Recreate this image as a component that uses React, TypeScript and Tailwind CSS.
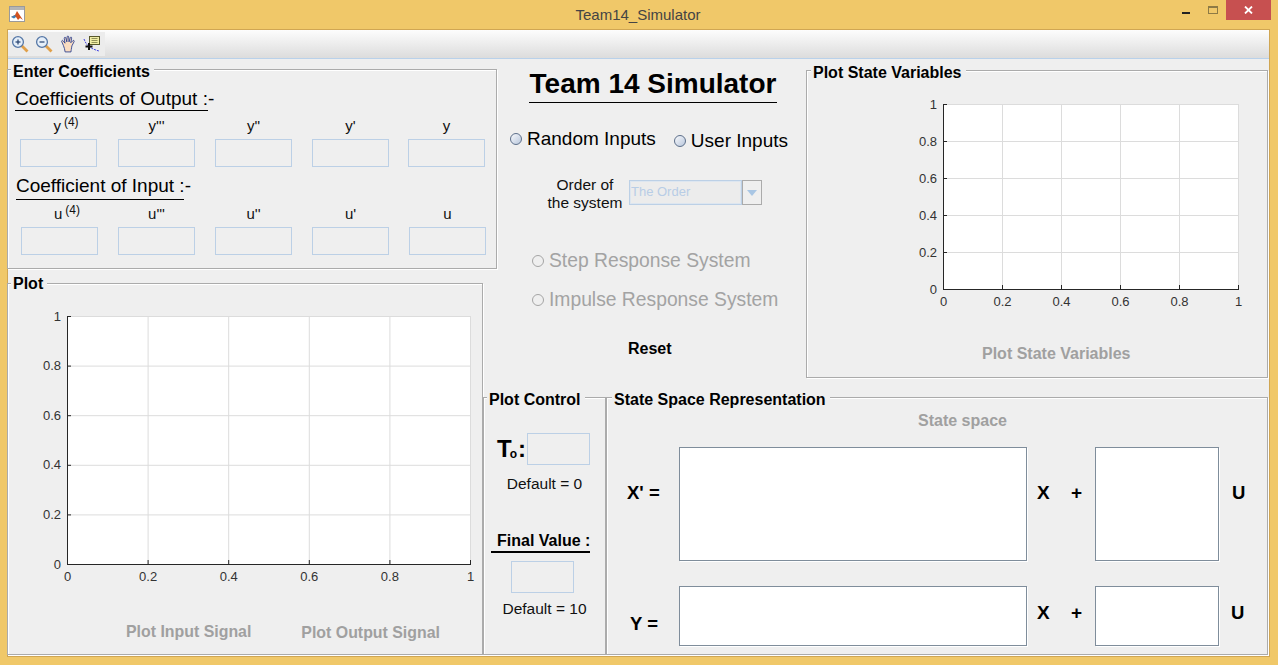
const font = "[font-family:'Liberation_Sans',Arial,sans-serif]";

function CoefRow({ letter, gaps }: { letter: string; gaps: number[] }) {
  const labels = [
    <span className="pl-[15px]">
      {letter}
      <sup className="relative -top-[5px] ml-[3px] align-baseline text-[12px]">(4)</sup>
    </span>,
    <>{letter}'''</>,
    <>{letter}''</>,
    <>{letter}'</>,
    <>{letter}</>,
  ];
  return (
    <div className="flex">
      {labels.map((label, i) => (
        <div key={i} className="flex w-[77px] flex-col items-center" style={{ marginLeft: gaps[i] }}>
          <div className="flex h-[20px] items-end whitespace-nowrap text-[15px] leading-[18px] text-[#111]">{label}</div>
          <div className="mt-[4px] h-[28px] w-[77px] border border-[#bcd0e6] bg-[#efefef]" />
        </div>
      ))}
    </div>
  );
}

function Panel({
  title,
  titleLeft = "left-[3px]",
  titleTop = "-top-[7px]",
  className = "",
  children,
}: {
  title: string;
  titleLeft?: string;
  titleTop?: string;
  className?: string;
  children?: React.ReactNode;
}) {
  return (
    <div className={`relative border border-[#ababab] shadow-[inset_1px_1px_0_#fff,1px_1px_0_#fff] ${className}`}>
      <div
        className={`absolute bg-[#efefef] pl-[2px] pr-[4px] text-[16px] font-bold leading-[18px] text-black whitespace-nowrap ${titleLeft} ${titleTop}`}
      >
        {title}
      </div>
      {children}
    </div>
  );
}

function Chart({ w, h }: { w: number; h: number }) {
  const left = 30;
  const top = 8;
  const ticks = [0, 0.2, 0.4, 0.6, 0.8, 1];
  return (
    <svg width={left + w + 12} height={top + h + 26} className="block">
      <rect x={left} y={top} width={w} height={h} fill="#fff" />
      {ticks.map((t) => {
        const x = left + t * w + 0.5;
        return (
          <g key={"x" + t}>
            <line x1={x} x2={x} y1={top} y2={top + h} stroke="#dcdcdc" />
            <line x1={x} x2={x} y1={top + h} y2={top + h - 4} stroke="#262626" />
            <text x={x} y={top + h + 17} textAnchor="middle" fontSize={13} fill="#333" fontFamily="Liberation Sans">
              {t}
            </text>
          </g>
        );
      })}
      {ticks.map((t) => {
        const y = top + h - t * h + 0.5;
        return (
          <g key={"y" + t}>
            <line x1={left} x2={left + w} y1={y} y2={y} stroke="#dcdcdc" />
            <line x1={left} x2={left + 4} y1={y} y2={y} stroke="#262626" />
            <text x={left - 6} y={y + 4} textAnchor="end" fontSize={13} fill="#333" fontFamily="Liberation Sans">
              {t}
            </text>
          </g>
        );
      })}
      <line x1={left + 0.5} x2={left + 0.5} y1={top} y2={top + h + 1} stroke="#262626" />
      <line x1={left} x2={left + w + 1} y1={top + h + 0.5} y2={top + h + 0.5} stroke="#262626" />
    </svg>
  );
}

function Radio({ disabled = false }: { disabled?: boolean }) {
  return (
    <span
      className={`inline-block h-[12px] w-[12px] rounded-full border ${
        disabled
          ? "border-[#a5a5a5] bg-[#efefef]"
          : "border-[#5d6f8a] bg-gradient-to-br from-[#f8f9fc] to-[#b9c7dc]"
      }`}
    />
  );
}

function MatrixBox({ className = "" }: { className?: string }) {
  return <div className={`border border-[#7f8d9b] bg-white shadow-[1px_1px_0_#fff] ${className}`} />;
}

function Magnifier({ plus }: { plus: boolean }) {
  return (
    <svg width="18" height="18" viewBox="0 0 18 18">
      <line x1="10.5" y1="10.5" x2="16.5" y2="16.5" stroke="#e0a04a" strokeWidth="2.8" />
      <circle cx="7" cy="7" r="5.4" fill="#e6eff9" stroke="#5577a6" strokeWidth="1.3" />
      <line x1="4.5" y1="7" x2="9.5" y2="7" stroke="#24406e" strokeWidth="1.2" />
      {plus && <line x1="7" y1="4.5" x2="7" y2="9.5" stroke="#24406e" strokeWidth="1.2" />}
    </svg>
  );
}

function ToolIcons() {
  return (
    <div className="flex h-[24px] items-center gap-[6px] bg-[#ececec] pl-[3px] pr-[4px]">
      <Magnifier plus />
      <Magnifier plus={false} />
      <svg width="18" height="18" viewBox="1.5 0.5 13.5 16.5">
        <path
          d="M4 10 L2.5 6.5 C2.2 5.5 3.4 5 4 6 L5.5 8 L4.8 3.5 C4.7 2.4 6 2.2 6.3 3.3 L7.2 6.8 L7.4 2.3 C7.5 1.2 8.8 1.2 8.9 2.3 L9.2 6.8 L10.3 3 C10.6 2 11.8 2.3 11.6 3.4 L10.8 7.6 L12.6 5.8 C13.4 5 14.4 5.8 13.8 6.7 L11.8 10.5 C11.4 13 11 15 11 16 L5.6 16 C5.4 14 4.8 12 4 10 Z"
          fill="#fadcc0"
          stroke="#2a3f8f"
          strokeWidth="0.8"
        />
      </svg>
      <svg width="18" height="18" viewBox="0 0 18 18">
        <rect x="6.5" y="1.5" width="10" height="8" fill="#f1eea6" stroke="#59592c" />
        <path d="M8.5 3.5h6M8.5 5.5h6M8.5 7.5h6" stroke="#7a7a44" strokeWidth="0.8" />
        <path d="M1 4 C3 9 5 13 16 16" fill="none" stroke="#2b2be0" strokeWidth="0.9" strokeDasharray="2 1" />
        <path d="M6 8v7M2.5 11.5h7" stroke="#111" strokeWidth="2" />
      </svg>
    </div>
  );
}

function MatrixRow({
  label,
  height,
  className,
  labelClass,
  sideTop,
  uClass,
}: {
  label: string;
  height: string;
  className: string;
  labelClass: string;
  sideTop: string;
  uClass: string;
}) {
  return (
    <div className={`flex items-start ${className}`}>
      <span className={`text-[18.5px] font-bold leading-[22px] text-black ${labelClass}`}>{label}</span>
      <MatrixBox className={`${height} w-[348px]`} />
      <span className={`ml-[10px] w-[34px] text-[19px] font-bold leading-[22px] text-black ${sideTop}`}>X</span>
      <span className={`w-[24px] text-[19px] font-bold leading-[22px] text-black ${sideTop}`}>+</span>
      <MatrixBox className={`${height} w-[124px]`} />
      <span className={`text-[18.5px] font-bold leading-[22px] text-black ${sideTop} ${uClass}`}>U</span>
    </div>
  );
}

export default function App() {
  return (
    <div className={`flex h-[665px] w-[1278px] flex-col overflow-hidden bg-[#f0c869] ${font}`}>
      {/* title bar */}
      <div className="flex h-[29px] shrink-0 items-start">
        <div className="ml-[9px] mt-[6px] h-[16px] w-[16px] border border-[#9a9a9a] bg-white">
          <div className="h-[3px] bg-[#b5b5b5]" />
          <svg width="14" height="11" viewBox="0 0 12 11" className="block">
            <path d="M0 7 L4 5 L6 1 L8 4 L12 10 L9 8 L7 10 L5 7 Z" fill="#d2521f" />
            <path d="M0 7 L4 5 L5 7 L3 8.5 Z" fill="#3d7fb5" />
          </svg>
        </div>
        <div className="flex-1 pl-[69px] pt-[6px] text-center text-[15px] leading-[18px] text-[#444]">Team14_Simulator</div>
        <div className="mr-[7px] flex h-[20px] items-start">
          <div className="mr-[18px] mt-[12px] h-[2px] w-[8px] bg-[#222]" />
          <div className="mr-[8px] mt-[6px] h-[8px] w-[10px] border border-t-2 border-[#8d7a45]" />
          <div className="flex h-[20px] w-[45px] items-center justify-center bg-[#c75050]">
            <svg width="9" height="8" viewBox="0 0 9 8">
              <path d="M1 0.5 L8 7.5 M8 0.5 L1 7.5" stroke="#fff" strokeWidth="1.8" />
            </svg>
          </div>
        </div>
      </div>

      {/* window body */}
      <div className="mb-[8px] ml-[7px] mr-[8px] flex min-h-0 flex-1 flex-col border border-[#d0a653] bg-[#efefef]">
        <div className="h-[29px] shrink-0 border-b border-[#b9d1ea] bg-gradient-to-b from-[#fdfdfd] to-[#dcdcdc] pt-[2px]">
          <div className="inline-block">
            <ToolIcons />
          </div>
        </div>

        <div className="flex min-h-0 flex-1 pb-[1px] pt-[11px]">
          {/* left column */}
          <div className="flex w-[475px] shrink-0 flex-col">
            <Panel title="Enter Coefficients" className="-ml-[1px] -mt-[1px] h-[200px] w-[490px]">
              <div className="pl-[7px] pt-[18px]">
                <div className="w-[193px] whitespace-nowrap border-b border-black text-[19px] leading-[22px] text-black">
                  Coefficients of Output :-
                </div>
                <div className="mt-[4px]">
                  <CoefRow letter="y" gaps={[5, 21, 20, 20, 19]} />
                </div>
                <div className="ml-[1px] mt-[8px] w-[168px] whitespace-nowrap border-b border-black pb-[2px] text-[19px] leading-[22px] text-black">
                  Coefficient of Input :-
                </div>
                <div className="mt-[3px]">
                  <CoefRow letter="u" gaps={[6, 20, 20, 20, 20]} />
                </div>
              </div>
            </Panel>
            <Panel title="Plot" titleTop="-top-[9px]" className="-ml-[1px] mt-[14px] min-h-0 flex-1">
              <div className="pl-[29px] pt-[24px]">
                <Chart w={403} h={248} />
              </div>
              <div className="mt-[32px] flex items-start pl-[118px] text-[15.9px] font-bold leading-[20px] text-[#a0a0a0]">
                <span>Plot Input Signal</span>
                <span className="ml-[50px] mt-[1px]">Plot Output Signal</span>
              </div>
            </Panel>
          </div>

          {/* right column */}
          <div className="flex min-w-0 flex-1 flex-col">
            <div className="flex h-[319px] shrink-0">
              {/* center controls */}
              <div className="relative z-10 w-[323px] shrink-0">
                <div className="-mt-[1px] ml-[46px] w-[248px] whitespace-nowrap border-b border-black pb-[3px] text-center text-[28px] font-bold leading-[30px] text-black">
                  Team 14 Simulator
                </div>
                <div className="mt-[25px] flex items-start pl-[27px] text-[19px] leading-[22px] text-black">
                  <div className="flex items-center gap-[5px]">
                    <Radio />
                    <span>Random Inputs</span>
                  </div>
                  <div className="ml-[18px] mt-[2px] flex items-center gap-[5px]">
                    <Radio />
                    <span>User Inputs</span>
                  </div>
                </div>
                <div className="mt-[24px] flex items-end pl-[64px]">
                  <div className="w-[76px] whitespace-nowrap text-center text-[15.5px] leading-[18px] text-[#111]">
                    Order of
                    <br />
                    the system
                  </div>
                  <div className="mb-[7px] ml-[6px] flex h-[25px] w-[133px]">
                    <div className="w-[113px] border border-[#bcd0e6] bg-[#ececec] pl-[1px] text-[13px] leading-[21px] text-[#b8cde6] shadow-[inset_0_0_0_1px_#dde6f0]">
                      The Order
                    </div>
                    <div className="flex w-[20px] items-center justify-center border border-[#ababab] bg-[#efefef]">
                      <span className="h-0 w-0 border-x-[5px] border-t-[6px] border-x-transparent border-t-[#a9c6e4]" />
                    </div>
                  </div>
                </div>
                <div className="mt-[39px] flex flex-col gap-[19px] pl-[49px] text-[19.3px] leading-[20px] text-[#a3a3a3]">
                  <div className="flex items-center gap-[5px]">
                    <Radio disabled />
                    <span>Step Response System</span>
                  </div>
                  <div className="flex items-center gap-[5px]">
                    <Radio disabled />
                    <span>Impulse Response System</span>
                  </div>
                </div>
                <div className="mt-[30px] pl-[145px] text-[16px] font-bold leading-[18px] text-black">Reset</div>
              </div>

              {/* state plot */}
              <Panel title="Plot State Variables" titleLeft="left-[4px]" className="mr-[1px] h-[308px] flex-1">
                <div className="pl-[106px] pt-[25px]">
                  <Chart w={295} h={185} />
                </div>
                <div className="mt-[29px] pl-[175px] text-[16px] font-bold leading-[20px] text-[#a0a0a0]">
                  Plot State Variables
                </div>
              </Panel>
            </div>

            {/* bottom panels */}
            <div className="flex min-h-0 flex-1 pt-[8px]">
              <Panel title="Plot Control" className="w-[123px] shrink-0">
                <div className="flex flex-col items-center pt-[35px]">
                  <div className="flex items-center self-start pl-[13px]">
                    <span className="text-[24px] font-bold leading-[28px] tracking-[-2px] text-black">T</span>
                    <span className="mt-[10px] text-[12px] font-bold leading-[12px] text-black">o</span>
                    <span className="ml-[1px] mr-[1px] text-[24px] font-bold leading-[28px] text-black">:</span>
                    <div className="h-[32px] w-[63px] border border-[#bcd0e6] bg-[#efefef]" />
                  </div>
                  <div className="mt-[10px] text-[15.5px] leading-[18px] text-[#111]">Default = 0</div>
                  <div className="ml-[7px] mt-[38px] w-[99px] self-start whitespace-nowrap border-b-2 border-black pl-[6px] text-[16px] font-bold leading-[20px] text-black">
                    Final Value :
                  </div>
                  <div className="ml-[27px] mt-[8px] h-[32px] w-[63px] self-start border border-[#bcd0e6] bg-[#efefef]" />
                  <div className="mt-[7px] text-[15.5px] leading-[18px] text-[#111]">Default = 10</div>
                </div>
              </Panel>
              <Panel title="State Space Representation" titleLeft="left-[5px]" className="mr-[1px] flex-1">
                <div className="pl-[311px] pt-[14px] text-[16px] font-bold leading-[18px] text-[#a0a0a0]">State space</div>
                <MatrixRow
                  label="X' ="
                  height="h-[114px]"
                  className="mt-[17px] pl-[20px]"
                  labelClass="mt-[35px] w-[52px]"
                  sideTop="mt-[35px]"
                  uClass="ml-[13px]"
                />
                <MatrixRow
                  label="Y ="
                  height="h-[60px]"
                  className="mt-[25px] pl-[23px]"
                  labelClass="mt-[27px] w-[49px]"
                  sideTop="mt-[16px]"
                  uClass="ml-[12px]"
                />
              </Panel>
            </div>
          </div>
        </div>
      </div>
    </div>
  );
}
